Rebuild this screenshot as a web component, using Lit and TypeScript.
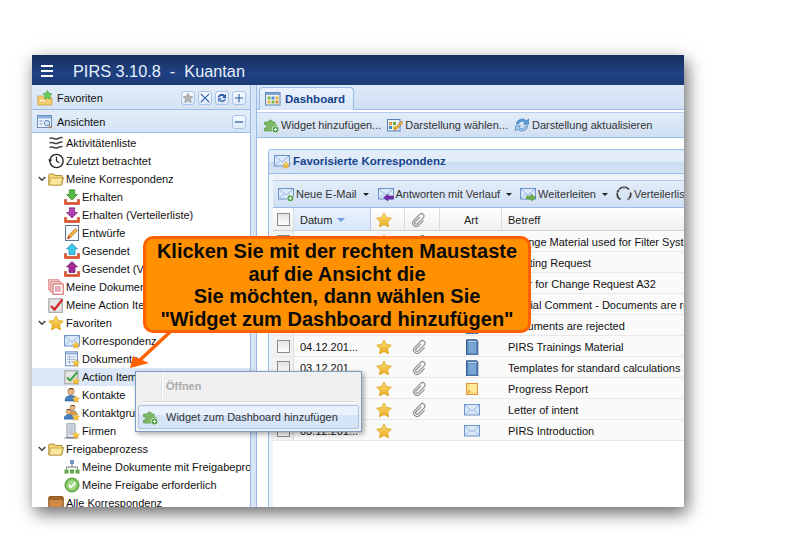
import { LitElement, html, css, svg } from "lit";
import { customElement } from "lit/decorators.js";

const star = (x = 0, y = 0, s = 1) =>
  svg`<path transform="translate(${x} ${y}) scale(${s})" d="M8 .9l2.300 4.500 5 .8-3.600 3.600.8 5L8 12.500l-4.500 2.300.8-5L.7 6.200l5-.8z" fill="url(#sg)" stroke="#dca21e" stroke-width=".8" stroke-linejoin="round"/>`;
const trayArrow = (c: string, e: string, up = false) => svg`
  <path d="M.5 10.500v5h15v-5h-2v3h-11v-3z" fill="#e8552a" stroke="#b03010" stroke-width=".5"/>
  <path d="${up ? "M8 .5l5.500 5.500H11v5.500H5V6H2.500z" : "M5.300 .8h5.400v4.700h2.800L8 11 2.500 5.500h2.800z"}" fill="${c}" stroke="${e}" stroke-width=".7"/>`;
const mail = (extra: unknown = "") => svg`
  <rect x=".5" y="2.500" width="15" height="10.500" fill="#dbe8fa" stroke="#6d92c6"/>
  <path d="M1 3l7 6 7-6M1 12.500l5-5M15 12.500l-5-5" fill="none" stroke="#8fb0dc" stroke-width=".9"/>${extra}`;
const smallPlus = (x: number, y: number, c = "#3f9a3c") => svg`
  <circle cx="${x}" cy="${y}" r="3.400" fill="${c}" stroke="#fff" stroke-width=".7"/>
  <path d="M${x - 1.8} ${y}h3.600M${x} ${y - 1.8}v3.600" stroke="#fff" stroke-width="1"/>`;
const puzzle = svg`<path d="M3 5h2.500a2 2 0 1 1 4 0H12v3a1.800 1.800 0 1 1 0 3.500V14H1.500v-3a1.800 1.800 0 1 0 0-3.500V5z" fill="#7cb866" stroke="#5a9648" stroke-width=".7"/>${smallPlus(12.5, 12.5)}`;
const user = (x = 0, c = "#4a7ec2") => svg`
  <circle cx="${7 + x}" cy="4.500" r="3.200" fill="#e9b98b" stroke="#9a6234" stroke-width=".6"/>
  <path d="M${4 + x} 2.800c1-2.300 5.500-2.300 6 .3-1.800-.8-3.800-1-6-.3z" fill="#7a4a22"/>
  <path d="M${1 + x} 14c0-3.800 2.300-5.500 6-5.500s6 1.700 6 5.500z" fill="${c}" stroke="#2f5c96" stroke-width=".6"/>`;

const ICONS: Record<string, unknown> = {
  favFolder: svg`<path d="M.8 6h5l1.200 1.500h8V15H.8z" fill="#f5cd6e" stroke="#c79a35" stroke-width=".7"/><rect x="3" y="10" width="5" height="1" fill="#fff"/><path transform="translate(5.500 0) scale(.62)" d="M8 .9l2.300 4.500 5 .8-3.600 3.600.8 5L8 12.500l-4.500 2.300.8-5L.7 6.200l5-.8z" fill="#66cf5e" stroke="#3f9a3c"/>`,
  view: svg`<rect x=".5" y="1.500" width="14" height="12" fill="#eef4fc" stroke="#6d8fc0"/><rect x="1" y="2" width="13" height="2.500" fill="#8fb0dc"/><path d="M2.500 7h3M2.500 10h3" stroke="#7b93b8"/><circle cx="10" cy="9" r="2.700" fill="#cfe2f7" stroke="#6d8fc0"/><path d="M12 11.200l2.500 3" stroke="#c08a4a" stroke-width="1.600"/>`,
  waves: svg`<path d="M1.500 3.500c3-2.200 5 1.700 8 .3 1.500-.7 3-1.300 5-1.300M1.500 8c3-2.200 5 1.700 8 .3 1.500-.7 3-1.300 5-1.300M1.500 12.500c3-2.200 5 1.700 8 .3 1.500-.7 3-1.300 5-1.300" fill="none" stroke="#444" stroke-width="1.500"/>`,
  clock: svg`<circle cx="8.500" cy="8" r="6.700" fill="#fff" stroke="#222" stroke-width="1.300"/><path d="M8.500 3.800V8l2.800 1.800" fill="none" stroke="#222" stroke-width="1.200"/><path d="M0 6.500l2 2.500 2.500-2.500z" fill="#222"/>`,
  folder: svg`<path d="M.8 4V14h13l1.600-7.500H14V4.500H7L6 3H1.500z" fill="#f5d873" stroke="#a9832c" stroke-width=".9"/><path d="M2.800 7h12l-1.500 7H1z" fill="#f9e89c" stroke="#b8933a" stroke-width=".7"/>`,
  inGreen: trayArrow("#58b842", "#2f8424"),
  inPurple: trayArrow("#b040b0", "#7a1f7a"),
  outCyan: trayArrow("#3cc8ea", "#1c8ab0", true),
  outPurple: trayArrow("#a02c96", "#6f1a68", true),
  draft: svg`<rect x="1.500" y=".5" width="13" height="15" fill="#f6f9fd" stroke="#5a7394"/><path d="M3.500 14l1-3.500L11.500 3.500l2 2L6.500 12.500z" fill="#f0b040" stroke="#a76a20" stroke-width=".6"/><path d="M3.500 14l1-3.500 2 2z" fill="#d7402a"/>`,
  docs: svg`<rect x=".8" y=".8" width="10" height="10" fill="#fbe2e2" stroke="#d87a7a"/><rect x="2.800" y="2.800" width="10" height="10" fill="#fbe8e8" stroke="#d87a7a"/><rect x="5" y="5" width="10.200" height="10.200" fill="#fff" stroke="#cc5555"/><path d="M7 8h6M7 10h6M7 12h6" stroke="#d85a7a"/>`,
  action: svg`<rect x=".8" y="1.800" width="13.500" height="13.500" fill="#e4e4e4" stroke="#9c9c9c"/><path d="M3 9l3.500 3.500L14.500 2.500" fill="none" stroke="#d8272a" stroke-width="2.300"/>`,
  starBig: star(0, 0, 1),
  mailStar: svg`${mail()}${star(8, 8, 0.5)}`,
  docStar: svg`<rect x="1.500" y=".8" width="12" height="14" fill="#f3f7fd" stroke="#6d8fc0"/><rect x="2" y="1.500" width="11" height="2" fill="#8fb0dc"/><path d="M3 6h9M3 8.500h9M3 11h9M5.500 4v9" stroke="#96aed0" stroke-width=".8"/>${star(8, 8, 0.5)}`,
  actionStar: svg`<rect x=".8" y="1.800" width="13" height="13" fill="#e4e4e4" stroke="#9c9c9c"/><path d="M3 8.500l3 3L13.500 3" fill="none" stroke="#43a84a" stroke-width="2.200"/>${star(8, 8, 0.5)}`,
  userStar: svg`${user()}${star(8, 8, 0.5)}`,
  usersStar: svg`<g transform="translate(3 -1) scale(.8)">${user(0, "#d9a24a")}</g><g transform="translate(-1 3) scale(.8)">${user(0)}</g>${star(8, 8, 0.5)}`,
  company: svg`<rect x="3" y=".8" width="8" height="13.500" fill="#eef0f3" stroke="#8a94a4"/><path d="M4.500 3h5M4.500 5h5M4.500 7h5M4.500 9h5M4.500 11h5" stroke="#8fa0b8"/><path d="M.5 15h13" stroke="#667"/>${star(8, 8, 0.5)}`,
  org: svg`<rect x="6" y="1" width="4" height="4" fill="#6d92c6"/><path d="M8 5v3M2.500 10V8h11v2" fill="none" stroke="#777"/><rect x=".5" y="10.500" width="4" height="4" fill="#5aa84a"/><rect x="6" y="10.500" width="4" height="4" fill="#5aa84a"/><rect x="11.500" y="10.500" width="4" height="4" fill="#5aa84a"/>`,
  checkCircle: svg`<circle cx="8" cy="8" r="7" fill="#7cc35a" stroke="#4f9440"/><circle cx="8" cy="8" r="4.800" fill="#a3d888"/><path d="M4.800 8l2.300 2.300 4.200-4.600" fill="none" stroke="#fff" stroke-width="1.800"/>`,
  box: svg`<rect x=".8" y="1.500" width="14.400" height="14" rx="1.500" fill="#d08a45" stroke="#7f4c1c"/><rect x=".8" y="1.500" width="14.400" height="3.500" fill="#a36428"/>`,
  puzzle,
  layout: svg`<rect x=".5" y="2.500" width="12.500" height="11.500" fill="#e8f0fa" stroke="#5b80b4"/><path d="M2 5h3v3H2z" fill="#d94"/><path d="M6 5h3v3H6z" fill="#6a4"/><path d="M2 9h3v3H2z" fill="#48c"/><path d="M6 9h3v3H6z" fill="#dc4"/><path d="M7 14l1-3 6.500-7 1.500 1.500-6.500 7z" fill="#eeb048" stroke="#a5701f" stroke-width=".6"/>`,
  refresh: svg`<path d="M2.300 7A6 6 0 0 1 12.500 3.800L14.500 2v5.200H9.300l1.800-1.800A3.800 3.800 0 0 0 4.700 7z" fill="#5d9fdc" stroke="#2e6cae" stroke-width=".6"/><path d="M13.700 9A6 6 0 0 1 3.500 12.200L1.500 14V8.800h5.200l-1.800 1.800A3.800 3.800 0 0 0 11.300 9z" fill="#a9cdf0" stroke="#2e6cae" stroke-width=".6"/>`,
  mailNew: svg`${mail()}${smallPlus(12.3, 12.3)}`,
  mailReply: svg`${mail()}<path d="M5.500 11.500l4.500-3.300v1.800h5.500v3H10V15z" fill="#7a2cb0" stroke="#4e1a78" stroke-width=".5"/>`,
  mailFwd: svg`${mail()}<path d="M15.800 11.500l-4.500-3.300v1.800H6.500v3h4.800V15z" fill="#72b04a" stroke="#47802c" stroke-width=".5"/>`,
  cycle: svg`<path d="M3 3.500A6.300 6.300 0 0 1 13 3.500M14.500 6.500a6.300 6.300 0 0 1-3 7M1.500 6.500a6.300 6.300 0 0 0 3 7" fill="none" stroke="#333" stroke-width="1.500"/><circle cx="8" cy="1.800" r="1.500" fill="#999"/><circle cx="2" cy="5" r="1.300" fill="#555"/><circle cx="13" cy="13" r="1.300" fill="#999"/>`,
  clip: svg`<g transform="rotate(45 8 8)"><path d="M6.500 5v7a1.500 1.500 0 0 0 3 0V3.500a2.500 2.500 0 0 0-5 0V12a3.500 3.500 0 0 0 7 0V5" fill="none" stroke="#8e8e8e" stroke-width="1.200"/></g>`,
  book: svg`<path d="M2.500 .8h10.300l1 1V16H2.500z" fill="#5a86bc" stroke="#345b8c"/><rect x="4.500" y="3.500" width="7.500" height="10.500" fill="#7aa6d4"/><path d="M4 2.500h8.500" stroke="#bcd4ee"/>`,
  note: svg`<rect x="2.500" y="2.500" width="11" height="11" fill="#fcdc84" stroke="#e8963a"/><rect x="5.500" y="3" width="7.500" height="7.500" fill="#fdea9c"/><path d="M3 13l3-3M4 10h2v2" fill="none" stroke="#e8963a"/>`,
  grid: svg`<rect x=".5" y="1.500" width="14.500" height="12.500" fill="#f2f6fb" stroke="#5b80b4"/><rect x=".5" y="1.500" width="14.500" height="2.500" fill="#7fa2d2"/><path d="M2.500 5.500h3v3h-3z" fill="#7ab648"/><path d="M6.500 5.500h3v3h-3z" fill="#5a93d8"/><path d="M10.500 5.500h3v3h-3z" fill="#e8b73c"/><path d="M2.500 9.500h3v3h-3z" fill="#e8b73c"/><path d="M6.500 9.500h3v3h-3z" fill="#7ab648"/><path d="M10.500 9.500h3v3h-3z" fill="#e88a3c"/>`,
  tStar: svg`<path d="M8 1.500l2 4.200 4.500.6-3.300 3.100.9 4.500L8 11.700l-4.100 2.200.9-4.500L1.500 6.300 6 5.700z" fill="#b4b4b4" stroke="#8a8a8a" stroke-width=".8"/>`,
  tX: svg`<path d="M2.500 2.500l11 11M13.500 2.500l-11 11" stroke="#2f5fa5" stroke-width="1.500" fill="none"/>`,
  tSync: svg`<path d="M2.500 7.200A5.200 5.200 0 0 1 11.500 4L13.500 2.500V8H8.300L10 6.300A3.300 3.300 0 0 0 4.500 7.200z" fill="#2f5fa5"/><path d="M13.500 8.800A5.200 5.200 0 0 1 4.500 12L2.500 13.500V8H7.700L6 9.700A3.300 3.300 0 0 0 11.500 8.800z" fill="#5f8cc8"/>`,
  tPlus: svg`<path d="M8 2.500v11M2.500 8h11" stroke="#2f5fa5" stroke-width="1.500" fill="none"/>`,
  tMinus: svg`<path d="M2.500 8h11" stroke="#2f5fa5" stroke-width="1.700" fill="none"/>`,
};

const icon = (name: string, size = 16) =>
  html`<svg class="ic" width=${size} height=${size} viewBox="0 0 16 16">${ICONS[name]}</svg>`;

interface TreeRow { label: string; ic: string; lvl: number; open?: boolean; sel?: boolean }
const TREE: TreeRow[] = [
  { label: "Aktivitätenliste", ic: "waves", lvl: 0 },
  { label: "Zuletzt betrachtet", ic: "clock", lvl: 0 },
  { label: "Meine Korrespondenz", ic: "folder", lvl: 0, open: true },
  { label: "Erhalten", ic: "inGreen", lvl: 1 },
  { label: "Erhalten (Verteilerliste)", ic: "inPurple", lvl: 1 },
  { label: "Entwürfe", ic: "draft", lvl: 1 },
  { label: "Gesendet", ic: "outCyan", lvl: 1 },
  { label: "Gesendet (Verteilerliste)", ic: "outPurple", lvl: 1 },
  { label: "Meine Dokumente", ic: "docs", lvl: 0 },
  { label: "Meine Action Items", ic: "action", lvl: 0 },
  { label: "Favoriten", ic: "starBig", lvl: 0, open: true },
  { label: "Korrespondenz", ic: "mailStar", lvl: 1 },
  { label: "Dokumente", ic: "docStar", lvl: 1 },
  { label: "Action Items", ic: "actionStar", lvl: 1, sel: true },
  { label: "Kontakte", ic: "userStar", lvl: 1 },
  { label: "Kontaktgruppen", ic: "usersStar", lvl: 1 },
  { label: "Firmen", ic: "company", lvl: 1 },
  { label: "Freigabeprozess", ic: "folder", lvl: 0, open: true },
  { label: "Meine Dokumente mit Freigabeprozess", ic: "org", lvl: 1 },
  { label: "Meine Freigabe erforderlich", ic: "checkCircle", lvl: 1 },
  { label: "Alle Korrespondenz", ic: "box", lvl: 0 },
];

interface Row { date: string; clip: boolean; art: string; subject: string }
const ROWS: Row[] = [
  { date: "04.12.201...", clip: true, art: "mailPlain", subject: "Change Material used for Filter System" },
  { date: "04.12.201...", clip: true, art: "mailPlain", subject: "Meeting Request" },
  { date: "04.12.201...", clip: true, art: "note", subject: "Offer for Change Request A32" },
  { date: "04.12.201...", clip: true, art: "book", subject: "Official Comment - Documents are rejected" },
  { date: "04.12.201...", clip: true, art: "book", subject: "Documents are rejected" },
  { date: "04.12.201...", clip: true, art: "book", subject: "PIRS Trainings Material" },
  { date: "03.12.201...", clip: true, art: "book", subject: "Templates for standard calculations" },
  { date: "03.12.201...", clip: true, art: "note", subject: "Progress Report" },
  { date: "03.12.201...", clip: true, art: "mailPlain", subject: "Letter of intent" },
  { date: "03.12.201...", clip: false, art: "mailPlain", subject: "PIRS Introduction" },
];

@customElement("app-root")
export class AppRoot extends LitElement {
  static styles = css`
    :host { display: block; width: 791px; height: 539px; overflow: hidden; background: #fff; font: 11px "Liberation Sans", Arial, sans-serif; color: #111; position: relative; }
    .defs { display: block; height: 0; width: 0; }
    .page { padding: 55px 0 0 32px; }
    .win { width: 652px; height: 452px; display: flex; flex-direction: column; overflow: hidden; position: relative; background: #fff; box-shadow: 3px 6px 16px rgba(0,0,0,.6); }
    .ic { display: block; flex: none; }
    .top { flex: none; height: 30px; display: flex; align-items: center; gap: 20px; padding: 2px 0 0 9px; box-sizing: border-box; background: linear-gradient(#17305e, #1f4184 60%, #1c3b74); color: #e8f0fb; font-size: 16.300px; white-space: pre; }
    .burger { width: 12px; height: 12px; flex: none; border-top: 2px solid #fff; border-bottom: 2px solid #fff; box-sizing: border-box; }
    .burger::after { content: ""; display: block; height: 2px; margin-top: 3px; background: #fff; }
    .body { flex: 1; display: flex; min-height: 0; }
    .left { width: 219px; flex: none; display: flex; flex-direction: column; border-right: 1px solid #99bbe8; box-sizing: border-box; }
    .phead { display: flex; align-items: center; gap: 3px; padding: 2px 4px 0 5px; background: linear-gradient(#e3edf9, #d4e3f5); border-bottom: 1px solid #99bbe8; box-sizing: border-box; }
    .phead.a { height: 25px; }
    .phead.b { height: 23px; }
    .phead .t { flex: 1; margin-left: 1px; }
    .tool { width: 14px; height: 14px; box-sizing: border-box; border: 1px solid #a5c4e8; border-radius: 3px; background: linear-gradient(#f8fbff, #dfeafa); display: flex; align-items: center; justify-content: center; }
    .tool .ic { width: 12px; height: 12px; }
    .tree { flex: 1; background: #fff; overflow: hidden; padding-top: 1px; }
    .row { height: 18px; display: flex; align-items: center; white-space: nowrap; }
    .row.sel { background: #dce8f8; }
    .row .chev { width: 16px; flex: none; display: flex; justify-content: center; padding-left: 4px; box-sizing: border-box; }
    .row .lbl { margin-left: 2px; }
    .row.l1 { padding-left: 32px; }
    .split { width: 6px; flex: none; background: #d5e4f6; border-right: 1px solid #99bbe8; box-sizing: border-box; }
    .right { flex: 1; min-width: 0; display: flex; flex-direction: column; overflow: hidden; }
    .tabs { flex: none; height: 25px; box-sizing: border-box; padding: 2px 0 0 2px; background: linear-gradient(#dee9f8, #cfdff3); border-bottom: 1px solid #99bbe8; display: flex; }
    .tab { height: 23px; width: 95px; box-sizing: border-box; border: 1px solid #99bbe8; border-bottom: 0; border-radius: 4px 4px 0 0; background: linear-gradient(#eaf2fc, #d8e6f7); display: flex; align-items: center; gap: 4px; padding-left: 5px; font-weight: bold; font-size: 11.500px; color: #15428b; }
    .tb { flex: none; height: 26px; box-sizing: border-box; margin-top: 2px; background: linear-gradient(#e3edf9, #cfdff3); border-top: 1px solid #b5cdec; border-bottom: 1px solid #99bbe8; display: flex; align-items: center; padding-left: 6px; color: #333; }
    .tb .it { display: flex; align-items: center; gap: 2px; margin-right: 6px; white-space: nowrap; }
    .dash { flex: 1; background: #fff; padding: 11px 0 0 11px; min-height: 0; }
    .panel { width: 500px; height: 360px; border-left: 1px solid #99bbe8; border-top: 1px solid #99bbe8; border-radius: 3px 0 0 0; box-sizing: border-box; display: flex; flex-direction: column; }
    .ptitle { flex: none; height: 24px; box-sizing: border-box; display: flex; align-items: center; gap: 3px; padding: 0 0 1px 5px; font-weight: bold; font-size: 11.500px; color: #15428b; background: linear-gradient(#e3edf9 50%, #c9dbf2 50%, #d6e4f6); border-bottom: 1px solid #99bbe8; }
    .pbody { flex: 1; padding: 6px 0 0 4px; background: #eef3fb; min-height: 0; }
    .gbox { height: 100%; background: #fff; }
    .gtb { height: 28px; box-sizing: border-box; background: linear-gradient(#e3edf9, #cfdff3); border-top: 1px solid #b5cdec; border-bottom: 1px solid #99bbe8; display: flex; align-items: center; padding-left: 5px; color: #333; white-space: nowrap; }
    .gtb .it { display: flex; align-items: center; gap: 2px; }
    .caret { width: 0; height: 0; margin: 1px 8px 0 6px; border: 3px solid transparent; border-top: 3px solid #222; border-bottom: 0; }
    .caret.first { margin-right: 9px; }
    .g { display: grid; grid-template-columns: 21px 77px 34px 35px 62px 1fr; }
    .hd { height: 23px; box-sizing: border-box; padding-top: 1px; display: flex; align-items: center; justify-content: center; border-right: 1px solid #dcdcdc; border-bottom: 1px solid #d0d0d0; background: linear-gradient(#fff, #f0f0f0); color: #222; }
    .hd.date { justify-content: flex-start; padding-left: 6px; gap: 3px; background: linear-gradient(#ebf3fd, #d6e6fb); border-right-color: #b5cdec; }
    .hd.subj { justify-content: flex-start; padding-left: 6px; border-right: 0; }
    .hd.st, .cell.st { padding-right: 8px; }
    .hd.cl, .cell.cl { padding-right: 6px; }
    .hd.ar, .cell.ar { padding-left: 1px; }
    .sort { width: 0; height: 0; border: 4px solid transparent; border-top: 4px solid #6f9bd8; border-bottom: 0; margin-left: 2px; }
    .cell { height: 21px; box-sizing: border-box; padding-top: 1px; display: flex; align-items: center; justify-content: center; background: #fafafa; border-bottom: 1px solid #e8e8e8; white-space: nowrap; color: #111; }
    .cell.tx { justify-content: flex-start; padding-left: 6px; }
    .cell.ck { background: #f2f2f2; border-right: 1px solid #dcdcdc; }
    .check { width: 13px; height: 13px; box-sizing: border-box; border: 1px solid #8c8c8c; background: linear-gradient(#e4e4e4, #fdfdfd); }
    .callout { position: absolute; left: 143px; top: 236px; width: 388px; height: 97px; box-sizing: border-box; border: 3px solid #ff6000; border-radius: 10px; background: #ff9100; color: #0a0a0a; font-size: 20px; font-weight: bold; line-height: 22.500px; text-align: center; padding-top: 1px; display: flex; flex-direction: column; white-space: nowrap; }
    .arrow { position: absolute; left: 120px; top: 325px; }
    .menu { position: absolute; left: 135px; top: 371px; width: 227px; height: 61px; box-sizing: border-box; border: 1px solid #7f9cc4; background: #f0f0f0; box-shadow: 2px 2px 5px rgba(0,0,0,.35); }
    .mcol { position: absolute; left: 25px; top: 0; bottom: 0; width: 1px; background: #e2e3e3; border-right: 1px solid #fff; }
    .mdis { height: 27px; padding-left: 30px; font-weight: bold; color: #ababab; display: flex; align-items: center; position: relative; }
    .msep { height: 1px; margin: 2px 6px 0 6px; background: #dadada; border-bottom: 1px solid #fff; position: relative; }
    .mit { position: absolute; left: 2px; right: 2px; top: 33px; height: 24px; box-sizing: border-box; border: 1px solid #a9c5e8; border-radius: 2px; background: linear-gradient(#e8f1fc 40%, #d5e4f7 40%, #d5e4f7); display: flex; align-items: center; padding-left: 3px; gap: 8px; color: #333; }
  `;

  render() {
    return html`
      <svg class="defs" aria-hidden="true"><defs><linearGradient id="sg" x1="0" y1="0" x2="0" y2="1"><stop offset="0" stop-color="#fbe173"/><stop offset="1" stop-color="#eba91f"/></linearGradient></defs></svg>
      <div class="page">
        <div class="win">
          <div class="top"><span class="burger"></span><span>PIRS 3.10.8  -  Kuantan</span></div>
          <div class="body">
            <div class="left">
              <div class="phead a">${icon("favFolder")}<span class="t">Favoriten</span>
                ${["tStar", "tX", "tSync", "tPlus"].map((g) => html`<span class="tool">${icon(g)}</span>`)}
              </div>
              <div class="phead b">${icon("view")}<span class="t">Ansichten</span><span class="tool">${icon("tMinus")}</span></div>
              <div class="tree">
                ${TREE.map((r) => html`
                  <div class="row ${r.lvl ? "l1" : ""} ${r.sel ? "sel" : ""}">
                    ${r.lvl ? "" : html`<span class="chev">${r.open ? html`<svg width="8" height="6" viewBox="0 0 8 6"><path d="M.7 1l3.300 3.300L7.300 1" fill="none" stroke="#444" stroke-width="1.500"/></svg>` : ""}</span>`}
                    ${icon(r.ic)}<span class="lbl">${r.label}</span>
                  </div>`)}
              </div>
            </div>
            <div class="split"></div>
            <div class="right">
              <div class="tabs"><div class="tab">${icon("grid")}<span>Dashboard</span></div></div>
              <div class="tb">
                <span class="it">${icon("puzzle")}Widget hinzufügen...</span>
                <span class="it">${icon("layout")}Darstellung wählen...</span>
                <span class="it">${icon("refresh")}Darstellung aktualisieren</span>
              </div>
              <div class="dash">
                <div class="panel">
                  <div class="ptitle">${icon("mailStar")}<span>Favorisierte Korrespondenz</span></div>
                  <div class="pbody"><div class="gbox">
                    <div class="gtb">
                      <span class="it">${icon("mailNew")}Neue E-Mail</span><span class="caret first"></span>
                      <span class="it">${icon("mailReply")}Antworten mit Verlauf</span><span class="caret"></span>
                      <span class="it">${icon("mailFwd")}Weiterleiten</span><span class="caret"></span>
                      <span class="it">${icon("cycle")}Verteilerliste</span>
                    </div>
                    <div class="g">
                      <div class="hd"><span class="check"></span></div>
                      <div class="hd date">Datum<span class="sort"></span></div>
                      <div class="hd st">${icon("starBig")}</div>
                      <div class="hd cl">${icon("clip")}</div>
                      <div class="hd ar">Art</div>
                      <div class="hd subj">Betreff</div>
                      ${ROWS.map((r) => html`
                        <div class="cell ck"><span class="check"></span></div>
                        <div class="cell tx">${r.date}</div>
                        <div class="cell st">${icon("starBig")}</div>
                        <div class="cell cl">${r.clip ? icon("clip") : ""}</div>
                        <div class="cell ar">${r.art === "mailPlain" ? html`<svg class="ic" width="16" height="16" viewBox="0 0 16 16">${mail()}</svg>` : icon(r.art)}</div>
                        <div class="cell tx">${r.subject}</div>`)}
                    </div>
                  </div></div>
                </div>
              </div>
            </div>
          </div>
        </div>
      </div>
      <svg class="arrow" width="60" height="56" viewBox="0 0 60 56">
        <path d="M50 7L20 35" stroke="#ff6000" stroke-width="3.500"/>
        <path d="M10 43l3-12 16 7z" fill="#ff6000"/>
      </svg>
      <div class="callout">
        <span>Klicken Sie mit der rechten Maustaste</span>
        <span>auf die Ansicht die</span>
        <span>Sie möchten, dann wählen Sie</span>
        <span>"Widget zum Dashboard hinzufügen"</span>
      </div>
      <div class="menu">
        <div class="mcol"></div>
        <div class="mdis">Öffnen</div>
        <div class="msep"></div>
        <div class="mit">${icon("puzzle")}<span>Widget zum Dashboard hinzufügen</span></div>
      </div>
    `;
  }
}
